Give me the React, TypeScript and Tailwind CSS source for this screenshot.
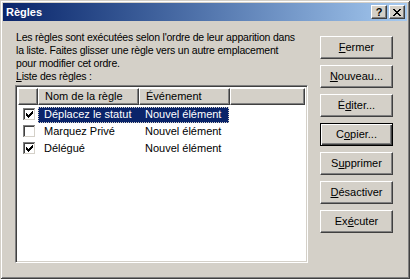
import React from "react";

const rules = [
  { name: "Déplacez le statut", event: "Nouvel élément", checked: true, selected: true },
  { name: "Marquez Privé", event: "Nouvel élément", checked: false, selected: false },
  { name: "Délégué", event: "Nouvel élément", checked: true, selected: false },
];

function CheckBox({ checked }: { checked: boolean }) {
  return (
    <svg width="13" height="13" viewBox="0 0 13 13" shapeRendering="crispEdges">
      <rect x="0" y="0" width="13" height="13" fill="#ffffff" />
      <rect x="0" y="0" width="12" height="1" fill="#808080" />
      <rect x="0" y="0" width="1" height="12" fill="#808080" />
      <rect x="1" y="1" width="10" height="1" fill="#404040" />
      <rect x="1" y="1" width="1" height="10" fill="#404040" />
      <rect x="1" y="11" width="11" height="1" fill="#d4d0c8" />
      <rect x="11" y="1" width="1" height="11" fill="#d4d0c8" />
      {checked && (
        <path
          d="M3 5h1v1h1v1h1V6h1V5h1V4h1V3h1v3H9v1H8v1H7v1H6v1H5V9H4V8H3z"
          fill="#000000"
        />
      )}
    </svg>
  );
}

function Btn({ children, def }: { children: React.ReactNode; def?: boolean }) {
  return (
    <button
      className={
        def
          ? "h-[23px] w-[73px] bg-[#d4d0c8] border border-black shadow-[inset_1px_1px_#ffffff,inset_-1px_-1px_#404040,inset_-2px_-2px_#808080] text-[11px] text-black"
          : "h-[23px] w-[73px] bg-[#d4d0c8] border border-t-white border-l-white border-r-[#404040] border-b-[#404040] shadow-[inset_-1px_-1px_#808080] text-[11px] text-black"
      }
    >
      {children}
    </button>
  );
}

function HeaderCell({ w, children }: { w?: string; children?: React.ReactNode }) {
  return (
    <div
      className={`${w ?? "flex-1"} h-[17px] bg-[#d4d0c8] border border-t-white border-l-white border-r-[#404040] border-b-[#404040] shadow-[inset_-1px_-1px_#808080] pl-[6px] leading-[14px] whitespace-nowrap overflow-hidden`}
    >
      {children}
    </div>
  );
}

export default function App() {
  return (
    <div
      className="w-[410px] h-[279px] bg-[#d4d0c8] p-[3px] shadow-[inset_1px_1px_#d4d0c8,inset_-1px_-1px_#404040,inset_2px_2px_#ffffff,inset_-2px_-2px_#808080] text-[11px] text-black flex flex-col"
      style={{ fontFamily: '"Liberation Sans", Arial, sans-serif' }}
    >
      <div className="h-[18px] flex items-center justify-between pl-[3px] pr-[2px] bg-gradient-to-r from-[#0a246a] to-[#a6caf0]">
        <span className="text-white font-bold text-[11px]">Règles</span>
        <div className="flex gap-[2px]">
          <div className="w-[16px] h-[14px] bg-[#d4d0c8] border border-t-white border-l-white border-r-[#404040] border-b-[#404040] shadow-[inset_-1px_-1px_#808080] flex items-center justify-center font-bold text-[11px] leading-none">
            ?
          </div>
          <div className="w-[16px] h-[14px] bg-[#d4d0c8] border border-t-white border-l-white border-r-[#404040] border-b-[#404040] shadow-[inset_-1px_-1px_#808080] flex items-center justify-center">
            <svg width="8" height="7" viewBox="0 0 8 7" shapeRendering="crispEdges">
              <path
                d="M0 0h2v1h1v1h2V1h1V0h2v1H7v1H6v1H5v1h1v1h1v1h1v1H6V6H5V5H3v1H2v1H0V6h1V5h1V4h1V3H2V2H1V1H0z"
                fill="#000"
              />
            </svg>
          </div>
        </div>
      </div>

      <div className="flex-1 flex pl-[12px] pt-[10px] gap-[12px]">
        <div className="w-[293px] flex flex-col">
          <div className="pl-[1px] leading-[13px] whitespace-nowrap text-[10.5px] tracking-[-0.2px]">
            Les règles sont exécutées selon l'ordre de leur apparition dans
            <br />
            la liste. Faites glisser une règle vers un autre emplacement
            <br />
            pour modifier cet ordre.
            <br />
            <span className="underline">L</span>iste des règles :
          </div>
          <div className="mt-[2px] h-[178px] bg-white border border-t-[#808080] border-l-[#808080] border-r-white border-b-white shadow-[inset_1px_1px_#404040,inset_-1px_-1px_#d4d0c8] p-[2px] flex flex-col">
            <div className="flex">
              <HeaderCell w="w-[20px]" />
              <HeaderCell w="w-[101px]">Nom de la règle</HeaderCell>
              <HeaderCell w="w-[91px]">Événement</HeaderCell>
              <HeaderCell />
            </div>
            <div className="flex flex-col pt-[1px]">
              {rules.map((r) => (
                <div key={r.name} className="h-[17px] flex items-center">
                  <div className="w-[20px] flex justify-end pr-[2px]">
                    <CheckBox checked={r.checked} />
                  </div>
                  <div
                    className={
                      r.selected
                        ? "w-[191px] h-[16px] flex items-center bg-[#0a246a] text-white outline outline-1 outline-dotted outline-offset-[-1px] outline-[#d4d0c8]"
                        : "w-[191px] h-[16px] flex items-center"
                    }
                  >
                    <span className="w-[100px] pl-[6px] whitespace-nowrap">{r.name}</span>
                    <span className="pl-[7px] whitespace-nowrap">{r.event}</span>
                  </div>
                </div>
              ))}
            </div>
          </div>
        </div>

        <div className="flex flex-col gap-[6px] pt-[5px]">
          <Btn>
            <span className="underline">F</span>ermer
          </Btn>
          <Btn>
            <span className="underline">N</span>ouveau...
          </Btn>
          <Btn>
            É<span className="underline">d</span>iter...
          </Btn>
          <Btn def>
            C<span className="underline">o</span>pier...
          </Btn>
          <Btn>
            S<span className="underline">u</span>pprimer
          </Btn>
          <Btn>
            <span className="underline">D</span>ésactiver
          </Btn>
          <Btn>
            Ex<span className="underline">é</span>cuter
          </Btn>
        </div>
      </div>
    </div>
  );
}
